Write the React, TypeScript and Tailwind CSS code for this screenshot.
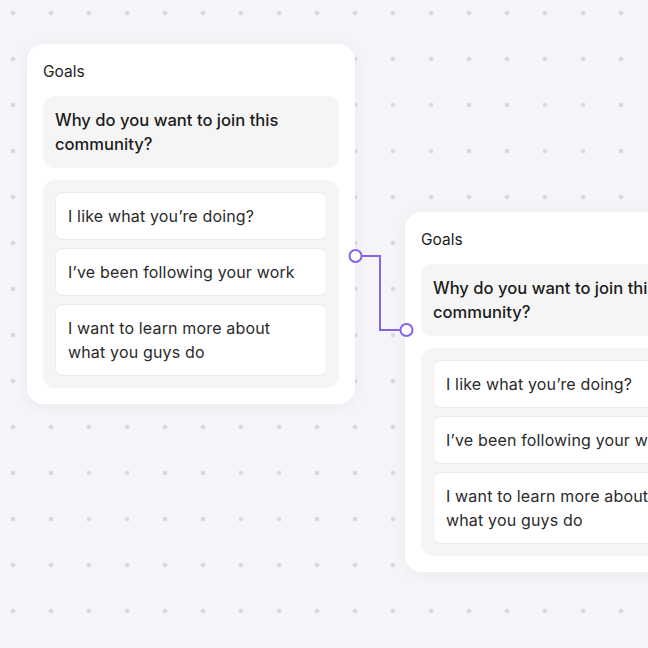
const options = [
  "I like what you’re doing?",
  "I’ve been following your work",
  "I want to learn more about what you guys do",
];

function GoalsCard({ className }: { className: string }) {
  return (
    <div
      className={`absolute w-[328px] rounded-2xl bg-white p-4 shadow-[0_2px_14px_rgba(20,20,40,0.05)] ${className}`}
    >
      <div className="text-[15.5px] leading-6 text-[#1c1c1c]">Goals</div>
      <div className="mt-3 rounded-xl bg-[#f5f5f5] p-3 text-[16.6px] font-medium leading-6 text-[#1c1c1c]">
        Why do you want to join this community?
      </div>
      <div className="mt-3 flex flex-col gap-2 rounded-xl bg-[#f5f5f5] p-3">
        {options.map((o) => (
          <div
            key={o}
            className="rounded-lg border border-[#ededed] bg-white py-[11px] pl-3 pr-6 text-[16px] leading-6 tracking-[0.01em] text-[#2a2a2a]"
          >
            {o}
          </div>
        ))}
      </div>
    </div>
  );
}

export default function App() {
  return (
    <div
      className="relative h-[648px] w-[648px] overflow-hidden bg-[#f5f5f9] bg-[radial-gradient(circle,#dadbe0_2.4px,transparent_2.6px)] bg-[size:38px_46px] bg-[position:-6px_-10px]"
      style={{ fontFamily: "Inter, 'Noto Sans', sans-serif" }}
    >
      <GoalsCard className="left-[27px] top-[44px]" />
      <GoalsCard className="left-[405px] top-[212px]" />
      <svg
        className="absolute left-0 top-0"
        width="648"
        height="648"
        viewBox="0 0 648 648"
        fill="none"
      >
        <path d="M361 256 H380 V330 H400" stroke="#8a62ea" strokeWidth="2" />
        <circle cx="355.5" cy="256" r="6" fill="white" stroke="#8a62ea" strokeWidth="2" />
        <circle cx="406.5" cy="330" r="6" fill="white" stroke="#8a62ea" strokeWidth="2" />
      </svg>
    </div>
  );
}
